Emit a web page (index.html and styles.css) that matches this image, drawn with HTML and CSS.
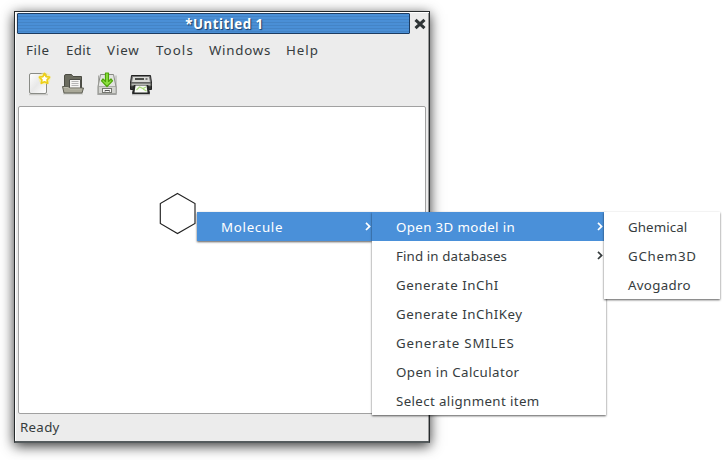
FILE: index.html
```html
<!DOCTYPE html>
<html lang="en">
<head>
<meta charset="utf-8">
<title>Untitled 1</title>
<link rel="stylesheet" href="styles.css">
</head>
<body>
<main class="window">
  <header class="titlebar">
    <h1 class="title"><span>*Untitled 1</span></h1>
    <svg class="close" width="12" height="12" viewBox="0 0 12 12"><path d="M1.500 1.800 10.500 10.200M10.500 1.800 1.500 10.200" stroke="#2e3436" stroke-width="3"/></svg>
  </header>
  <nav class="menubar">
    <span class="m-file">File</span><span class="m-edit">Edit</span><span class="m-view">View</span><span class="m-tools">Tools</span><span class="m-windows">Windows</span><span class="m-help">Help</span>
  </nav>
  <div class="toolbar">
    <svg width="24" height="24" viewBox="0 0 24 24">
      <defs><linearGradient id="paper" x2="1" y2="1"><stop stop-color="#fff"/><stop offset=".5" stop-color="#e8e8e8"/><stop offset="1" stop-color="#fff"/></linearGradient></defs>
      <path d="M2 22.500h19" stroke="#c9c9c6" stroke-width="1.500"/>
      <rect x="2.500" y="1.500" width="17" height="20" rx="1.500" fill="url(#paper)" stroke="#898b86"/>
      <circle cx="17.500" cy="6.500" r="6" fill="#fcf08a" opacity=".6"/>
      <path d="m17.500 1.500 1.600 3.100 3.500.5-2.500 2.700.6 3.500-3.200-1.500-3.200 1.500.6-3.500-2.500-2.700 3.500-.5z" fill="#fff" stroke="#edcf17" stroke-width="1.700" stroke-linejoin="round"/>
    </svg>
    <svg width="24" height="24" viewBox="0 0 24 24">
      <path d="M2 21.800h20" stroke="#c4c5c0" stroke-width="1.200"/>
      <path d="M3.500 17V4q0-1.500 1.500-1.500h5.500l1.500 2h8.500v13z" fill="#6b6c5f" stroke="#4b4c43"/>
      <path d="M8.500 7.500h11v10h-11z" fill="#f5f5f3" stroke="#4d4e48"/>
      <path d="M10.500 9.500h7M10.500 11.500h7M10.500 13.500h7" stroke="#b5b5b5"/>
      <path d="M1.500 14.500h5.500l2 1.500h13.500l-1.500 5h-18z" fill="#aaa999" stroke="#5e5f54" stroke-linejoin="round"/>
      <path d="M2.800 15.500h4l2 1.500h12" fill="none" stroke="#c5c5b9" stroke-width=".7"/>
    </svg>
    <svg width="24" height="24" viewBox="0 0 24 24">
      <path d="M2 22.500h20" stroke="#bbb"/>
      <path d="M5.500 2.500h13l2.500 12v7.500h-18v-7.500z" fill="#e3e4e1" stroke="#888a85" stroke-linejoin="round"/>
      <path d="M3.500 3.500v18h17.500v-18" fill="none" stroke="#999b96" stroke-width=".8"/>
      <path d="M3.500 14.500h17.500v7h-17.500z" fill="#d2d3cf" stroke="#989a95" stroke-width=".7"/>
      <rect x="7.500" y="16.500" width="9" height="4" fill="#f7f7f6" stroke="#74766f"/>
      <path d="M10 19.500v-1h4.500v1" fill="none" stroke="#555"/>
      <path d="M10.500 1h3v8.500l2.500-2.500 1.500 1.800-5.500 5.700-5.500-5.700 1.500-1.800 2.500 2.500z" fill="#8be03f" stroke="#4da407" stroke-width="1.200" stroke-linejoin="round"/>
    </svg>
    <svg width="24" height="24" viewBox="0 0 24 24">
      <path d="M3 22.500h18" stroke="#bbb" stroke-width="1.500"/>
      <path d="M2.500 3.500h19l1 7.500v6.500h-21v-6.500z" fill="#343635" stroke="#222" stroke-linejoin="round"/>
      <path d="M3.500 4.500h17l1 6h-19z" fill="#d9dad6" stroke="#777"/>
      <path d="M6 7h9" stroke="#4b4d49" stroke-width="2"/><path d="M16.500 7h2" stroke="#777" stroke-width="2"/>
      <path d="M2 11h20v3h-20z" fill="#b5b7b2" stroke="#50524f"/>
      <path d="M5 13.500h14l1.500 8h-17z" fill="#252726" stroke="#252726"/>
      <path d="M6.500 13.500h11l1 7h-13z" fill="#f8faf6"/>
      <path d="m7.500 18 3-3 3.500 1.500 3-1.500M14 17l3.500 2" fill="none" stroke="#a9dc7c" stroke-width="1.200"/>
    </svg>
  </div>
  <section class="canvas">
    <svg class="hexagon" width="38" height="43" viewBox="0 0 38 43"><path d="M18.500 1.500 36 11.500v20L18.500 41.500 1.300 31.500v-20z" fill="none" stroke="#222" stroke-width="1.150"/></svg>
  </section>
  <footer class="status">Ready</footer>
</main>

<ul class="menu menu-context">
  <li class="active"><span class="t-molecule">Molecule</span><svg class="arrow" width="6" height="9" viewBox="0 0 6 9"><path d="m1 .8 3.600 3.600L1 8"/></svg></li>
</ul>
<ul class="menu menu-molecule">
  <li class="active"><span class="t-model">Open 3D model in</span><svg class="arrow" width="6" height="9" viewBox="0 0 6 9"><path d="m1 .8 3.600 3.600L1 8"/></svg></li>
  <li><span class="t-find">Find in databases</span><svg class="arrow" width="6" height="9" viewBox="0 0 6 9"><path d="m1 .8 3.600 3.600L1 8"/></svg></li>
  <li><span class="t-inchi">Generate InChI</span></li>
  <li><span class="t-key">Generate InChIKey</span></li>
  <li><span class="t-smiles">Generate SMILES</span></li>
  <li><span class="t-calc">Open in Calculator</span></li>
  <li><span class="t-align">Select alignment item</span></li>
</ul>
<ul class="menu menu-programs">
  <li><span class="t-ghem">Ghemical</span></li>
  <li><span class="t-gchem">GChem3D</span></li>
  <li><span class="t-avo">Avogadro</span></li>
</ul>
</body>
</html>
```
FILE: styles.css
```css
* { box-sizing: border-box; }
body {
  margin: 0;
  width: 722px;
  height: 460px;
  overflow: hidden;
  position: relative;
  padding: 11px 0 0 14px;
  background: #fff;
  color: #363c3e;
  font: 13.3px/18px "Noto Sans", sans-serif;
  letter-spacing: .3px;
}
.window {
  width: 416px;
  height: 432px;
  display: flex;
  flex-direction: column;
  background: #ececec;
  border: 1px solid #272b2d;
  border-bottom-width: 2px;
  border-bottom-color: #555b5d;
  box-shadow: inset 1px 1px #fff, inset -1px 0 #999, 0 3px 12px rgba(0,0,0,.8);
}
.titlebar {
  display: flex;
  height: 22px;
  padding: 1px 3px 0 2px;
}
.title {
  width: 393px;
  height: 21px;
  margin: 0;
  padding-left: 22px;
  border: 1px solid #1d3c61;
  border-radius: 1px;
  background: repeating-linear-gradient(#4a8fd6 0 2px, #4484c6 2px 3px);
  color: #fff;
  font: bold 13.3px/20px "Noto Sans", sans-serif;
  letter-spacing: .5px;
  text-align: center;
  text-shadow: 1px 1px 1px #163c68;
}
.close { margin: 5px 0 0 4px; }
.menubar {
  display: flex;
  height: 32px;
  padding: 7px 0 0 11px;
  white-space: nowrap;
}
.m-file { width: 40px; letter-spacing: .6px; }
.m-edit { width: 41px; }
.m-view { width: 49px; letter-spacing: .9px; }
.m-tools { width: 53px; letter-spacing: 1.1px; }
.m-windows { width: 77px; letter-spacing: .75px; }
.m-help { letter-spacing: 1px; }
.toolbar {
  display: flex;
  gap: 10px;
  height: 40px;
  padding: 6px 0 0 12px;
}
.canvas {
  height: 308px;
  margin: 0 3px;
  padding: 85px 0 0 140px;
  background: #fff;
  border: 1px solid #a1a1a1;
  border-radius: 2px;
}
.hexagon { display: block; }
.status { padding: 4px 0 0 5px; }
.menu {
  position: absolute;
  margin: 0;
  padding: 0;
  list-style: none;
  background: #fff;
  box-shadow: 0 1px 2px rgba(0,0,0,.65);
}
.menu li {
  display: flex;
  justify-content: space-between;
  height: 29px;
  padding: 6px 1px 0 24px;
  white-space: nowrap;
}
.menu .active { background: #4a90d9; color: #fff; }
.menu-context { left: 197px; top: 212px; width: 175px; }
.menu-molecule { left: 372px; top: 212px; width: 234px; }
.menu-programs { left: 604px; top: 212px; width: 116px; }
.arrow { margin-top: 4px; fill: none; stroke: currentColor; stroke-width: 1.7; }
.menu-molecule .arrow { margin-right: 2px; }
.t-molecule { letter-spacing: .7px; }
.t-model { letter-spacing: .37px; }
.t-find { letter-spacing: .12px; }
.t-inchi, .t-key { letter-spacing: .54px; }
.t-smiles { letter-spacing: .78px; }
.t-calc { letter-spacing: .42px; }
.t-align { letter-spacing: .38px; }
.t-ghem { letter-spacing: .1px; }
.t-gchem { letter-spacing: .75px; }
```
